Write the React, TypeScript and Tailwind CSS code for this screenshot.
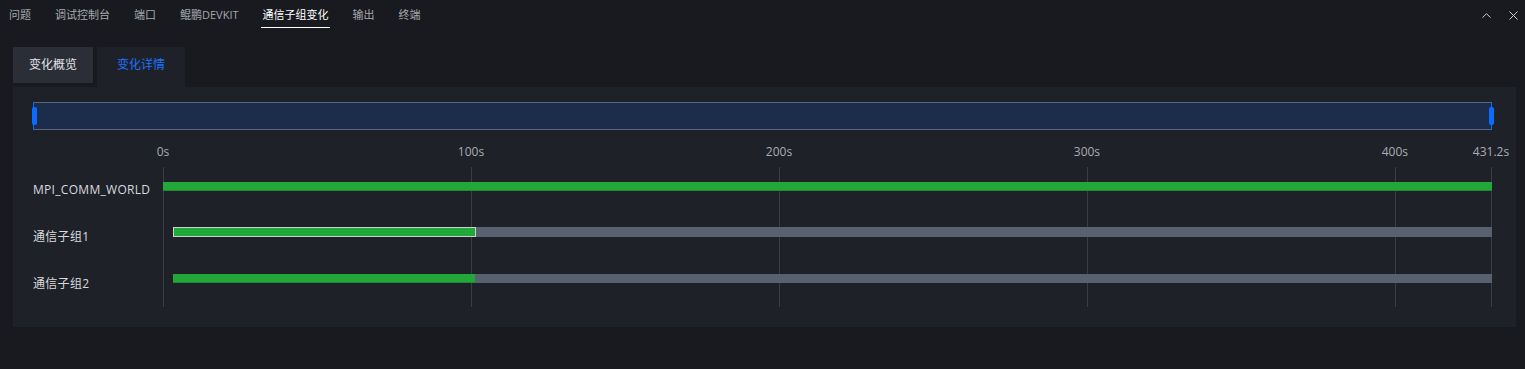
import { ChevronUp, X } from "lucide-react";

const panelTabs = ["问题", "调试控制台", "端口", "鲲鹏DEVKIT", "通信子组变化", "输出", "终端"];
const ticks = [0, 100, 200, 300, 400, 431.2];
const TOTAL = 431.2;

const pct = (t: number) => `${(t / TOTAL) * 100}%`;

const rows = [
  { name: "MPI_COMM_WORLD", h: "h-[9px]", start: 0, active: [0, TOTAL], outline: false },
  { name: "通信子组1", h: "h-[10px]", start: 3.25, active: [3.25, 101.6], outline: true },
  { name: "通信子组2", h: "h-[9px]", start: 3.25, active: [3.4, 101.2], outline: false },
];

export default function App() {
  return (
    <div
      className="w-[1525px] h-[369px] bg-[#181a1f] text-[#d4d6da] overflow-hidden"
      style={{ fontFamily: '"Open Sans", "Noto Sans CJK SC", sans-serif' }}
    >
      {/* Panel header */}
      <div className="flex items-center h-[30px] pl-[9px] pr-[4px]">
        <div className="flex items-center gap-[24px] text-[11px]">
          {panelTabs.map((t) => (
            <div
              key={t}
              className={
                t === "通信子组变化"
                  ? "relative text-white leading-[30px]"
                  : "text-[#a5a8ae] leading-[30px]"
              }
            >
              {t}
              {t === "通信子组变化" && (
                <div className="absolute -left-[2px] -right-[1px] bottom-[2px] h-px bg-white" />
              )}
            </div>
          ))}
        </div>
        <div className="ml-auto flex items-center gap-[12px] text-[#cccccc]">
          <ChevronUp size={15} strokeWidth={1.6} />
          <X size={15} strokeWidth={1.6} />
        </div>
      </div>

      {/* Content */}
      <div className="pl-[13px] pr-[9px] pt-[17px]">
        <div className="flex items-end gap-[4px] text-[12px]">
          <div className="w-[80px] h-[36px] mb-[4px] flex items-center justify-center bg-[#2b2e36] text-[#e2e4e8]">
            变化概览
          </div>
          <div className="w-[88px] h-[40px] pb-[4px] flex items-center justify-center bg-[#1f2129] text-[#1a74ff]">
            变化详情
          </div>
        </div>

        <div className="bg-[#1f2129] h-[240px] pt-[15px] pl-[20px] pr-[25px]">
          {/* Range slider */}
          <div className="relative w-[1459px] h-[28px] bg-[#1b2d4b] border border-[#59657a]">
            <div className="absolute -left-px top-[-1px] w-px h-[28px] bg-[#0a6cff]" />
            <div className="absolute -left-[2px] top-[4px] w-[5px] h-[18px] rounded-[2px] bg-[#0a6cff]" />
            <div className="absolute -right-px top-[-1px] w-px h-[28px] bg-[#0a6cff]" />
            <div className="absolute -right-[3px] top-[4px] w-[5px] h-[18px] rounded-[2px] bg-[#0a6cff]" />
          </div>

          {/* Timeline chart */}
          <div className="flex text-[12px]">
            <div className="w-[130px] shrink-0 pt-[31px] flex flex-col">
              {rows.map((r) => (
                <div key={r.name} className="h-[47px] pt-[10px] flex items-center text-[#d8dade] tracking-[0.3px]">
                  {r.name}
                </div>
              ))}
            </div>

            <div className="w-[1328px] flex flex-col">
              {/* Axis labels */}
              <div className="relative h-[18px] mt-[13px] text-[#a9acb2] leading-[18px]">
                {ticks.map((t) => (
                  <span key={t} className="absolute -translate-x-1/2" style={{ left: pct(t) }}>
                    {t}s
                  </span>
                ))}
              </div>

              <div className="relative mt-[2px] h-[144px]">
                {/* Grid lines */}
                {ticks.map((t) => (
                  <div key={t} className="absolute top-[4px] h-[140px] w-px bg-[#3a3d46]" style={{ left: pct(t) }} />
                ))}

                {/* Bars */}
                <div className="relative flex flex-col">
                  {rows.map((r) => (
                    <div key={r.name} className="h-[46px] flex items-center">
                      <div className={`relative w-full ${r.h}`}>
                        <div
                          className="absolute inset-y-0 bg-[#576170]"
                          style={{ left: pct(r.start), right: "-1px" }}
                        />
                        <div
                          className={
                            r.outline
                              ? "absolute inset-y-0 bg-[#22a838] border border-[#c9d2d0]"
                              : "absolute inset-y-0 bg-[#22a838] border-b border-[#1f8a31]"
                          }
                          style={{
                            left: pct(r.active[0]),
                            width: r.active[1] === TOTAL ? "calc(100% + 1px)" : pct(r.active[1] - r.active[0]),
                          }}
                        />
                      </div>
                    </div>
                  ))}
                </div>
              </div>
            </div>
          </div>
        </div>
      </div>
    </div>
  );
}
